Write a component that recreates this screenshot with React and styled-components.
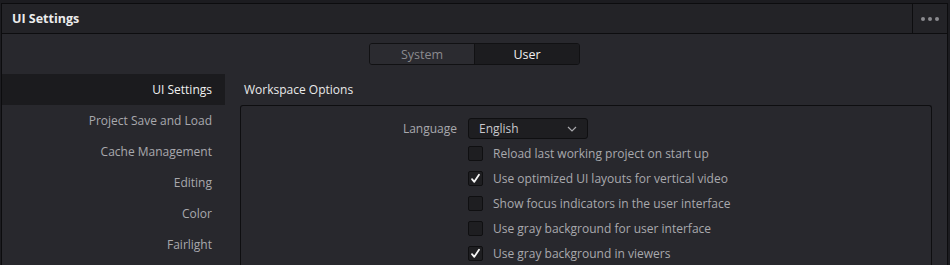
import React from "react";
import styled, { createGlobalStyle } from "styled-components";

const GlobalStyle = createGlobalStyle`
  html, body {
    margin: 0;
    padding: 0;
    background: #1c1c20;
    overflow: hidden;
  }
  body {
    font-family: "Open Sans", "Noto Sans", sans-serif;
    -webkit-font-smoothing: antialiased;
  }
`;

const Backdrop = styled.div`
  width: 950px;
  height: 265px;
  background: #1c1c20;
  padding-top: 3px;
  box-sizing: border-box;
  overflow: hidden;
`;

const Window = styled.div`
  margin-left: 1px;
  width: 947px;
  height: 270px;
  border: 1px solid #0c0c0e;
  border-bottom: none;
  background: #28282d;
  box-sizing: border-box;
`;

const TitleBar = styled.div`
  display: flex;
  align-items: stretch;
  height: 29px;
  background: #232327;
  border-bottom: 1px solid #0d0d0f;
`;

const Title = styled.div`
  flex: 1;
  display: flex;
  align-items: center;
  padding-left: 10px;
  color: #ececec;
  font-size: 12.5px;
  font-weight: 700;
`;

const MoreButton = styled.div`
  width: 34px;
  border-left: 1px solid #0d0d0f;
  display: flex;
  align-items: center;
  justify-content: center;
  gap: 3px;
`;

const Dot = styled.span`
  width: 4px;
  height: 4px;
  border-radius: 50%;
  background: #8a8a8e;
`;

const TabRow = styled.div`
  display: flex;
  justify-content: center;
  padding-top: 9px;
`;

const Segmented = styled.div`
  display: flex;
  border: 1px solid #111113;
  border-radius: 3px;
  overflow: hidden;
`;

const Segment = styled.div`
  width: 104px;
  height: 20px;
  display: flex;
  align-items: center;
  justify-content: center;
  font-size: 12.5px;
  color: ${(p) => (p.active ? "#f0f0f0" : "#8a8a8e")};
  background: ${(p) => (p.active ? "#1c1c1f" : "#2b2b30")};
  & + & {
    border-left: 1px solid #111113;
  }
`;

const Body = styled.div`
  display: flex;
  margin-top: 9px;
`;

const Sidebar = styled.div`
  width: 223px;
  display: flex;
  flex-direction: column;
`;

const NavItem = styled.div`
  height: 31px;
  display: flex;
  align-items: center;
  justify-content: flex-end;
  padding-right: 13px;
  font-size: 12px;
  color: ${(p) => (p.active ? "#f0f0f0" : "#a9a9ad")};
  background: ${(p) => (p.active ? "#1b1b1e" : "transparent")};
`;

const Content = styled.div`
  flex: 1;
  display: flex;
  flex-direction: column;
  padding-left: 15px;
  padding-right: 15px;
`;

const SectionTitle = styled.div`
  height: 31px;
  display: flex;
  align-items: center;
  padding-left: 4px;
  font-size: 12px;
  color: #eaeaea;
`;

const Panel = styled.div`
  border: 1px solid #0e0e10;
  border-bottom: none;
  border-radius: 3px 3px 0 0;
  padding-top: 10px;
  height: 200px;
  display: grid;
  grid-template-columns: 216px 1fr;
  grid-auto-rows: 25px;
  align-items: center;
  column-gap: 11px;
`;

const Label = styled.div`
  text-align: right;
  font-size: 12px;
  color: #a9a9ad;
`;

const Select = styled.div`
  width: 98px;
  height: 19px;
  border: 1px solid #0f0f11;
  border-radius: 3px;
  background: #1e1e21;
  display: flex;
  align-items: center;
  justify-content: space-between;
  padding: 0 10px;
  font-size: 12px;
  color: #c8c8cc;
`;

const CheckRow = styled.div`
  grid-column: 2;
  display: flex;
  align-items: center;
  gap: 10px;
  font-size: 12px;
  color: #a9a9ad;
`;

const Box = styled.span`
  width: 13px;
  height: 13px;
  border: 1px solid #0f0f11;
  border-radius: 2px;
  background: #1e1e21;
  display: flex;
  align-items: center;
  justify-content: center;
`;

const Check = () => (
  <svg width="11" height="11" viewBox="0 0 11 11">
    <path
      d="M2 6.2 L4.3 8.8 L9 1.8"
      fill="none"
      stroke="#f4f4f4"
      strokeWidth="1.8"
      strokeLinecap="round"
      strokeLinejoin="round"
    />
  </svg>
);

const Chevron = () => (
  <svg width="10" height="6" viewBox="0 0 10 6">
    <path d="M1 1 L5 5 L9 1" fill="none" stroke="#a9a9ad" strokeWidth="1.2" />
  </svg>
);

const navItems = [
  "UI Settings",
  "Project Save and Load",
  "Cache Management",
  "Editing",
  "Color",
  "Fairlight",
];

const options = [
  { text: "Reload last working project on start up", checked: false },
  { text: "Use optimized UI layouts for vertical video", checked: true },
  { text: "Show focus indicators in the user interface", checked: false },
  { text: "Use gray background for user interface", checked: false },
  { text: "Use gray background in viewers", checked: true },
];

export default function App() {
  return (
    <>
      <GlobalStyle />
      <Backdrop>
        <Window>
          <TitleBar>
            <Title>UI Settings</Title>
            <MoreButton>
              <Dot />
              <Dot />
              <Dot />
            </MoreButton>
          </TitleBar>
          <TabRow>
            <Segmented>
              <Segment>System</Segment>
              <Segment active>User</Segment>
            </Segmented>
          </TabRow>
          <Body>
            <Sidebar>
              {navItems.map((item, i) => (
                <NavItem key={item} active={i === 0}>
                  {item}
                </NavItem>
              ))}
            </Sidebar>
            <Content>
              <SectionTitle>Workspace Options</SectionTitle>
              <Panel>
                <Label>Language</Label>
                <Select>
                  English
                  <Chevron />
                </Select>
                {options.map((o) => (
                  <CheckRow key={o.text}>
                    <Box>{o.checked && <Check />}</Box>
                    {o.text}
                  </CheckRow>
                ))}
              </Panel>
            </Content>
          </Body>
        </Window>
      </Backdrop>
    </>
  );
}
